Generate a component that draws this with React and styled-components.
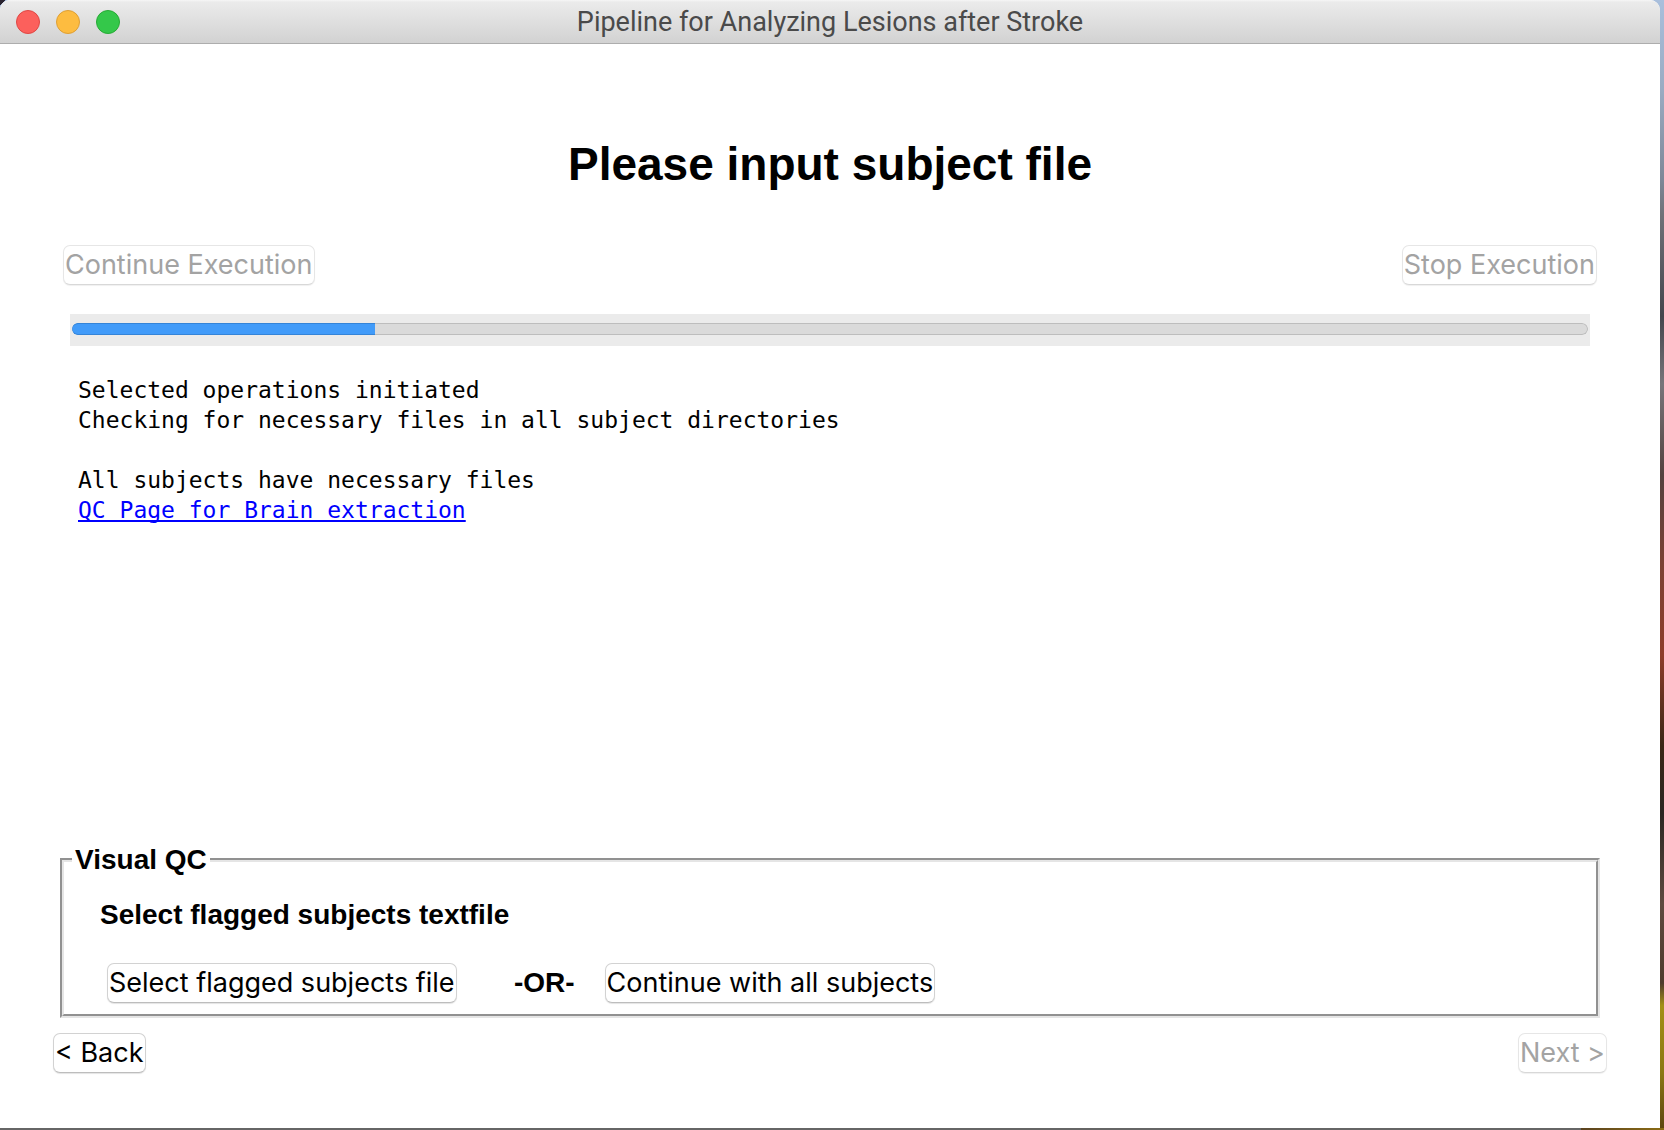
import React from "react";
import styled, { createGlobalStyle } from "styled-components";

const GlobalStyle = createGlobalStyle`
  *, *::before, *::after { box-sizing: border-box; }
  body { margin: 0; }
`;

const Desktop = styled.div`
  display: flex;
  min-height: 100vh;
  padding: 0 4px 2px 0;
  background:
    linear-gradient(90deg, #666 0 95%, #5a4320 95%, #8c6c14 100%) bottom / 100% 2px no-repeat,
    linear-gradient(135deg, #2b2430 0 4px, transparent 4px) top left / 10px 10px no-repeat,
    linear-gradient(180deg, #a9bfdc 0%, #9aabc2 8%, #7d8797 16%, #707178 19%, #44464d 28%,
      #77757a 34%, #54423f 42%, #7c4234 50%, #8d3d2a 58%, #3a2716 66%, #2b2622 72%,
      #5f4a40 80%, #4f3b2c 87%, #a39016 89%, #8a7713 95%, #5d4410 100%);
`;

const Window = styled.div`
  flex: 1;
  display: flex;
  flex-direction: column;
  min-width: 0;
  background: #fff;
  border-radius: 10px 10px 0 0;
  overflow: hidden;
  color: #000;
  font-family: "Liberation Sans", Arial, sans-serif;
`;

const TitleBar = styled.header`
  display: grid;
  grid-template-columns: 1fr auto 1fr;
  align-items: center;
  height: 44px;
  padding: 0 16px;
  background: linear-gradient(180deg, #f6f6f6 0, #ebebeb 2px, #d2d2d2 100%);
  border-bottom: 1px solid #adadad;
`;

const Lights = styled.div`
  display: flex;
  gap: 16px;
`;

const Light = styled.button`
  width: 24px;
  height: 24px;
  padding: 0;
  border: 1px solid ${(p) => p.$edge};
  border-radius: 50%;
  background: ${(p) => p.$fill};
`;

const WindowTitle = styled.div`
  color: #4a4a4a;
  font: 27px/32px Roboto, sans-serif;
`;

const Content = styled.main`
  flex: 1;
  display: flex;
  flex-direction: column;
  padding: 92px 60px 0;
`;

const Heading = styled.h1`
  margin: 0 0 53px;
  font-size: 46px;
  line-height: 56px;
  text-align: center;
`;

const ButtonRow = styled.div`
  display: flex;
  justify-content: space-between;
  padding: 0 3px;
`;

const PushButton = styled.button`
  height: 40px;
  padding: 0 1px;
  border: 1px solid #d2d2d2;
  border-bottom-color: #bdbdbd;
  border-radius: 7px;
  background: #fff;
  box-shadow: 0 1px 1px #e4e4e4;
  color: #000;
  font: 27px/32px Inter, sans-serif;
  white-space: nowrap;

  &:disabled {
    border-color: #e6e6e6;
    border-bottom-color: #d8d8d8;
    box-shadow: 0 1px 1px #f0f0f0;
    color: #a3a3a3;
  }
`;

const ProgressWell = styled.div`
  height: 32px;
  margin: 29px 10px;
  padding: 9px 2px 11px;
  background: #ebebeb;
`;

const Progress = styled.progress`
  appearance: none;
  display: block;
  width: 100%;
  height: 12px;
  border: 0;
  border-radius: 6px;
  overflow: hidden;

  &::-webkit-progress-bar {
    background: #dadada;
    box-shadow: inset 0 0 0 1px #bdbdbd;
    border-radius: 6px;
  }
  &::-webkit-progress-value {
    background: #419bf9;
    border-radius: 6px 0 0 6px;
    box-shadow: inset 0 1px #3484d8, inset 0 -1px #3484d8;
  }
`;

const Log = styled.div`
  flex: 1;
  padding: 0 18px;
  font: 23px/30px "DejaVu Sans Mono", monospace;
  white-space: pre-wrap;
`;

const LogLine = styled.div`
  min-height: 30px;
`;

const LogLink = styled.a`
  color: #00f;
  text-decoration: underline 2px;
  text-decoration-skip-ink: none;
  text-underline-offset: 2px;
`;

const Group = styled.fieldset`
  min-width: 0;
  margin: 0;
  padding: 0 36px 11px;
  border: 4px groove #e5e5e5;
`;

const Legend = styled.legend`
  margin-left: -28px;
  padding: 0 3px;
  font-size: 28px;
  font-weight: bold;
  line-height: 32px;
`;

const Label = styled.div`
  font-size: 28px;
  font-weight: bold;
  line-height: 32px;
`;

const GroupBody = styled.div`
  display: flex;
  flex-direction: column;
  gap: 32px;
  padding-top: 23px;
`;

const Choices = styled.div`
  display: grid;
  grid-template-columns: auto 148px auto;
  justify-content: start;
  align-items: center;
  padding-left: 7px;
`;

const Or = styled(Label)`
  padding-right: 30px;
  text-align: right;
`;

const Footer = styled.footer`
  display: flex;
  justify-content: space-between;
  padding: 15px 53px 55px;
`;

export default function App() {
  return (
    <>
      <GlobalStyle />
      <Desktop>
        <Window>
          <TitleBar>
            <Lights>
              <Light aria-label="Close" $fill="#fc605c" $edge="#df4744" />
              <Light aria-label="Minimize" $fill="#fdbc40" $edge="#de9f34" />
              <Light aria-label="Zoom" $fill="#34c84a" $edge="#27aa35" />
            </Lights>
            <WindowTitle>Pipeline for Analyzing Lesions after Stroke</WindowTitle>
          </TitleBar>
          <Content>
            <Heading>Please input subject file</Heading>
            <ButtonRow>
              <PushButton disabled>Continue Execution</PushButton>
              <PushButton disabled>Stop Execution</PushButton>
            </ButtonRow>
            <ProgressWell>
              <Progress value={20} max={100} aria-label="Execution progress" />
            </ProgressWell>
            <Log role="log">
              <LogLine>Selected operations initiated</LogLine>
              <LogLine>Checking for necessary files in all subject directories</LogLine>
              <LogLine />
              <LogLine>All subjects have necessary files</LogLine>
              <LogLine>
                <LogLink href="#qc">QC Page for Brain extraction</LogLink>
              </LogLine>
            </Log>
            <Group>
              <Legend>Visual QC</Legend>
              <GroupBody>
                <Label>Select flagged subjects textfile</Label>
                <Choices>
                  <PushButton>Select flagged subjects file</PushButton>
                  <Or>-OR-</Or>
                  <PushButton>Continue with all subjects</PushButton>
                </Choices>
              </GroupBody>
            </Group>
          </Content>
          <Footer>
            <PushButton>&lt; Back</PushButton>
            <PushButton disabled>Next &gt;</PushButton>
          </Footer>
        </Window>
      </Desktop>
    </>
  );
}
